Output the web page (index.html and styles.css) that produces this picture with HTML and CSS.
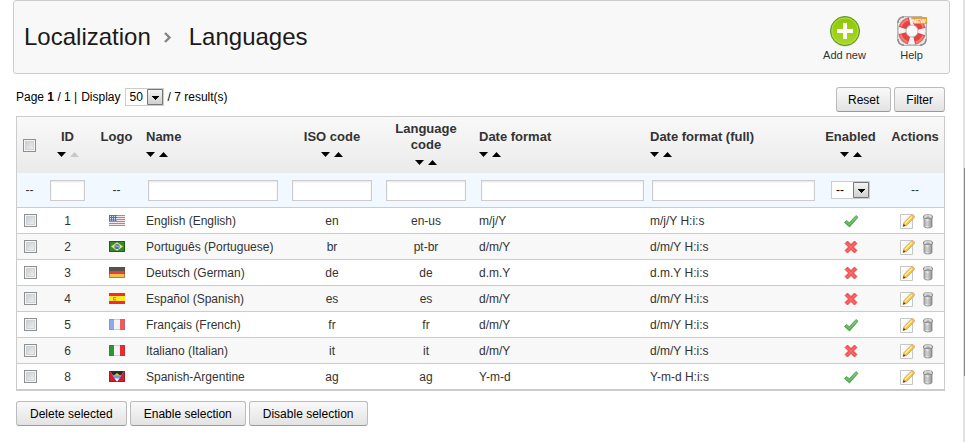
FILE: index.html
```
<!DOCTYPE html>
<html lang="en">
<head>
<meta charset="utf-8">
<title>Localization &gt; Languages</title>
<link rel="stylesheet" href="styles.css">
</head>
<body>
<svg class="defs" aria-hidden="true">
  <defs>
    <linearGradient id="g-green" x1="0" y1="0" x2="0" y2="1"><stop offset="0" stop-color="#8dc600"/><stop offset="1" stop-color="#a9d829"/></linearGradient>
    <linearGradient id="g-check" x1="0" y1="0" x2="0" y2="1"><stop offset="0" stop-color="#6fc466"/><stop offset="1" stop-color="#4aa347"/></linearGradient>
    <linearGradient id="g-can" x1="0" y1="0" x2="1" y2="0"><stop offset="0" stop-color="#aaa"/><stop offset=".4" stop-color="#f2f2f2"/><stop offset="1" stop-color="#888"/></linearGradient>
    <linearGradient id="g-select" x1="0" y1="0" x2="0" y2="1"><stop offset="0" stop-color="#f4f4f4"/><stop offset="1" stop-color="#cfcfcf"/></linearGradient>
  </defs>
  <symbol id="sort" viewBox="0 0 9 5"><path d="M0 0h9L4.500 5z" fill="currentColor"/></symbol>
  <symbol id="drop" viewBox="0 0 17 18"><path d="M.5 1.500h15v15H.500z" fill="url(#g-select)" stroke="#777"/><path d="M5 8h7v1h-1v1h-1v1H9v1H8v-1H7v-1H6V9H5z"/></symbol>
  <symbol id="check" viewBox="0 0 16 16"><path d="M1.500 9.500l2-2 2.800 2.300L13 2.500l2 1.800L6.500 14z" fill="url(#g-check)" stroke="#4b9c4a" stroke-width=".8" stroke-linejoin="round"/><path d="M3.300 9l3 2.700L13.200 4" fill="none" stroke="#8ed486" stroke-width=".8"/></symbol>
  <symbol id="cross" viewBox="0 0 16 16"><path d="M2 4.500L4.500 2 8 5.500 11.500 2 14 4.500 10.500 8l3.500 3.500-2.500 2.500L8 10.500 4.500 14 2 11.500 5.500 8z" fill="#f45252" stroke="#de4a50" stroke-width=".8" stroke-linejoin="round"/><path d="M3.500 4.200l8.600 8M12.200 4l-8.400 8.400" stroke="#ff8585" stroke-width=".8"/></symbol>
  <symbol id="edit" viewBox="0 0 16 16"><path d="M1.500 1.500h12v14h-12z" fill="#fdfdfd" stroke="#c6c6c6"/><path d="M3 6h5V3h3" fill="none" stroke="#eee"/><path d="M4 13.500l1-4 7.500-7.500q1.500-.8 2.700.8.600 1-.2 2L7.800 12.300z" fill="#f6c744" stroke="#d0954a" stroke-width=".8"/><path d="M6 10.500l7-7" stroke="#fff0a0" stroke-width="1.200"/><path d="M12 2.600l2.800 2.600q1-1.200.2-2.400-1.200-1.400-2.300-.9z" fill="#edb98a"/><path d="M4 13.500l.7-2.500 1.900 1.700z" fill="#4b3621"/></symbol>
  <symbol id="trash" viewBox="0 0 16 16"><path d="M4 4.500h8v9q-.2 1.500-4 1.500t-4-1.500z" fill="url(#g-can)" stroke="#858585" stroke-width=".8"/><path d="M6 7.500v5.500M8 8v5.500M10 7.500v5.500" stroke="#a2a2a2" stroke-width=".8"/><path d="M3.500 3q0-1.200 4.500-1.200T12.500 3v1.800q0 .9-4.500.9t-4.500-.9z" fill="#cacaca" stroke="#7c7c7c" stroke-width=".8"/><path d="M5 3h6" stroke="#f1f1f1"/><path d="M6.500 4.200h3" stroke="#777" stroke-width=".8"/></symbol>
  <symbol id="us" viewBox="0 0 16 11"><path d="M0 0h16v11H0z" fill="#f5e6e5"/><path d="M0 .5h16M0 2.500h16M0 4.500h16M0 6.500h16M0 8.500h16M0 10.500h16" stroke="#dd7571"/><path d="M0 0h8v6H0z" fill="#4977bd"/><path d="M1 1.500h7M1 3.500h7M1 5h7" stroke="#d2dff1" stroke-dasharray="1 1"/></symbol>
  <symbol id="br" viewBox="0 0 16 11"><path d="M0 0h16v11H0z" fill="#38892c"/><path d="M.5.5h15v10H.500z" fill="none" stroke="#176310"/><path d="M8 1.200l6 4.300-6 4.300-6-4.300z" fill="#dfe875"/><circle cx="8" cy="5.500" r="2.600" fill="#4a72b0"/><path d="M6 5q2-.5 4 1" fill="none" stroke="#c2dcee" stroke-width=".8"/></symbol>
  <symbol id="de" viewBox="0 0 16 11"><path d="M0 0h16v4H0z" fill="#55534c"/><path d="M0 4h16v3H0z" fill="#e04336"/><path d="M0 7h16v4H0z" fill="#f0c04c"/><path d="M.5.5h15v10H.500z" fill="none" stroke="#774128" stroke-opacity=".5"/></symbol>
  <symbol id="es" viewBox="0 0 16 11"><path d="M0 0h16v11H0z" fill="#ee2d25"/><path d="M0 3h16v5H0z" fill="#fbe62c"/><path d="M4 4h3v1H5v1h2v1.500H4z" fill="#d98735"/></symbol>
  <symbol id="fr" viewBox="0 0 16 11"><path d="M0 0h16v11H0z" fill="#f4f4f6"/><path d="M0 0h5v11H0z" fill="#8ea9e6"/><path d="M11 0h5v11h-5z" fill="#f15a5a"/><path d="M.5.5h15v10H.500z" fill="none" stroke="#6872ac" stroke-opacity=".3"/></symbol>
  <symbol id="it" viewBox="0 0 16 11"><path d="M0 0h16v11H0z" fill="#f3f3f3"/><path d="M0 0h5v11H0z" fill="#2c9635"/><path d="M11 0h5v11h-5z" fill="#ea2a2d"/><path d="M.5.5h15v10H.500z" fill="none" stroke="#444" stroke-opacity=".2"/></symbol>
  <symbol id="ag" viewBox="0 0 16 11"><path d="M0 0h16v11H0z" fill="#d91c2a"/><path d="M1 0h14L8 11z" fill="#fff"/><path d="M1 0h14l-3 4.500H4z" fill="#2c2a28"/><path d="M3.700 4.500h8.600L10.400 7.500H5.600z" fill="#5ea0e0"/><path d="M5 4.500L8 2l3 2.500z" fill="#e9bd38"/><path d="M.5.500h15v10H.500z" fill="none" stroke="#751620" stroke-opacity=".5"/></symbol>
</svg>

<div class="page">
  <main class="content">
    <header class="page-head">
      <h1>Localization
        <svg class="chevron" viewBox="0 0 8 12" aria-hidden="true"><path d="M1 2l4.500 4.500L1 11" fill="none" stroke="#858585" stroke-width="2.400"/></svg>
        Languages</h1>
      <nav class="tools">
        <a href="#add"><svg class="tool-icon" viewBox="0 0 32 32" aria-hidden="true"><circle cx="16" cy="17" r="14.500" fill="#ccc"/><circle cx="16" cy="16" r="14.500" fill="url(#g-green)" stroke="#51942e"/><circle cx="16" cy="16" r="13" fill="none" stroke="#b3dd48"/><path d="M14 8h4v6h6v4h-6v6h-4v-6H8v-4h6z" fill="#fff"/></svg>Add new</a>
        <a href="#help"><svg class="tool-icon" viewBox="0 0 32 32" aria-hidden="true">
          <path d="M6 1.500h20l4.500 5v19L26 30.500H6l-4.500-5v-19z" fill="#e6e6e6" stroke="#b5b5b5"/>
          <path d="M2 8q0-6 6-6M24 30q6 0 6-6M2 24q0 6 6 6" fill="none" stroke="#8f8f8f" stroke-width="1.500"/>
          <circle cx="16" cy="16" r="10" fill="none" stroke="#f3f3f3" stroke-width="8.500"/>
          <circle cx="16" cy="16" r="10" fill="none" stroke="#e84343" stroke-width="8" pathLength="80" stroke-dasharray="13 7" stroke-dashoffset="-4"/>
          <circle cx="16" cy="16" r="12" fill="none" stroke="#ff7a72" stroke-width="2" pathLength="80" stroke-dasharray="11 9" stroke-dashoffset="-5"/>
          <circle cx="16" cy="16" r="14" fill="none" stroke="#a7a7a7" stroke-width=".7"/>
          <circle cx="16" cy="16" r="6" fill="#fafafa" stroke="#aaa" stroke-width=".8"/>
          <path d="M15 2h16v7H17z" fill="#f39b2d"/>
          <text class="new" x="16" y="8">NEW</text>
        </svg>Help</a>
      </nav>
    </header>

    <form class="list">
      <div class="toolbar">
        <div class="pager">
          <span>Page <b>1</b> / 1 |</span>
          <label for="per-page">Display</label>
          <span class="select"><select id="per-page"><option>50</option></select><svg class="drop"><use href="#drop"/></svg></span>
          <span>/ 7 result(s)</span>
        </div>
        <div class="buttons">
          <button type="reset">Reset</button>
          <button type="button">Filter</button>
        </div>
      </div>

      <table>
        <colgroup><col class="c-check"><col class="c-id"><col class="c-logo"><col class="c-name"><col class="c-code"><col class="c-code"><col class="c-date"><col class="c-date"><col class="c-enabled"><col class="c-actions"></colgroup>
        <thead>
          <tr class="titles">
            <th><input type="checkbox" aria-label="Select all"></th>
            <th>ID<span class="sort"><svg><use href="#sort"/></svg><svg class="up current"><use href="#sort"/></svg></span></th>
            <th>Logo<span class="sort"></span></th>
            <th class="left">Name<span class="sort"><svg><use href="#sort"/></svg><svg class="up"><use href="#sort"/></svg></span></th>
            <th>ISO code<span class="sort"><svg><use href="#sort"/></svg><svg class="up"><use href="#sort"/></svg></span></th>
            <th>Language code<span class="sort"><svg><use href="#sort"/></svg><svg class="up"><use href="#sort"/></svg></span></th>
            <th class="left">Date format<span class="sort"><svg><use href="#sort"/></svg><svg class="up"><use href="#sort"/></svg></span></th>
            <th class="left">Date format (full)<span class="sort"><svg><use href="#sort"/></svg><svg class="up"><use href="#sort"/></svg></span></th>
            <th>Enabled<span class="sort"><svg><use href="#sort"/></svg><svg class="up"><use href="#sort"/></svg></span></th>
            <th>Actions<span class="sort"></span></th>
          </tr>
          <tr class="filters">
            <td>--</td>
            <td><input class="f-id" type="text" aria-label="ID"></td>
            <td>--</td>
            <td class="left"><input class="f-name" type="text" aria-label="Name"></td>
            <td><input class="f-code" type="text" aria-label="ISO code"></td>
            <td><input class="f-code" type="text" aria-label="Language code"></td>
            <td class="left"><input class="f-date" type="text" aria-label="Date format"></td>
            <td class="left"><input class="f-date" type="text" aria-label="Date format (full)"></td>
            <td><span class="select"><select aria-label="Enabled"><option>--</option></select><svg class="drop"><use href="#drop"/></svg></span></td>
            <td>--</td>
          </tr>
        </thead>
        <tbody>
          <tr><td><input type="checkbox" aria-label="Select English"></td><td>1</td><td><svg class="flag"><use href="#us"/></svg></td><td class="left">English (English)</td><td>en</td><td>en-us</td><td class="left">m/j/Y</td><td class="left">m/j/Y H:i:s</td><td><svg class="icon"><use href="#check"/></svg></td><td><span class="actions"><a href="#edit-1" aria-label="Edit"><svg class="icon"><use href="#edit"/></svg></a><a href="#delete-1" aria-label="Delete"><svg class="icon"><use href="#trash"/></svg></a></span></td></tr>
          <tr><td><input type="checkbox" aria-label="Select Português"></td><td>2</td><td><svg class="flag"><use href="#br"/></svg></td><td class="left">Português (Portuguese)</td><td>br</td><td>pt-br</td><td class="left">d/m/Y</td><td class="left">d/m/Y H:i:s</td><td><svg class="icon"><use href="#cross"/></svg></td><td><span class="actions"><a href="#edit-2" aria-label="Edit"><svg class="icon"><use href="#edit"/></svg></a><a href="#delete-2" aria-label="Delete"><svg class="icon"><use href="#trash"/></svg></a></span></td></tr>
          <tr><td><input type="checkbox" aria-label="Select Deutsch"></td><td>3</td><td><svg class="flag"><use href="#de"/></svg></td><td class="left">Deutsch (German)</td><td>de</td><td>de</td><td class="left">d.m.Y</td><td class="left">d.m.Y H:i:s</td><td><svg class="icon"><use href="#cross"/></svg></td><td><span class="actions"><a href="#edit-3" aria-label="Edit"><svg class="icon"><use href="#edit"/></svg></a><a href="#delete-3" aria-label="Delete"><svg class="icon"><use href="#trash"/></svg></a></span></td></tr>
          <tr><td><input type="checkbox" aria-label="Select Español"></td><td>4</td><td><svg class="flag"><use href="#es"/></svg></td><td class="left">Español (Spanish)</td><td>es</td><td>es</td><td class="left">d/m/Y</td><td class="left">d/m/Y H:i:s</td><td><svg class="icon"><use href="#cross"/></svg></td><td><span class="actions"><a href="#edit-4" aria-label="Edit"><svg class="icon"><use href="#edit"/></svg></a><a href="#delete-4" aria-label="Delete"><svg class="icon"><use href="#trash"/></svg></a></span></td></tr>
          <tr><td><input type="checkbox" aria-label="Select Français"></td><td>5</td><td><svg class="flag"><use href="#fr"/></svg></td><td class="left">Français (French)</td><td>fr</td><td>fr</td><td class="left">d/m/Y</td><td class="left">d/m/Y H:i:s</td><td><svg class="icon"><use href="#check"/></svg></td><td><span class="actions"><a href="#edit-5" aria-label="Edit"><svg class="icon"><use href="#edit"/></svg></a><a href="#delete-5" aria-label="Delete"><svg class="icon"><use href="#trash"/></svg></a></span></td></tr>
          <tr><td><input type="checkbox" aria-label="Select Italiano"></td><td>6</td><td><svg class="flag"><use href="#it"/></svg></td><td class="left">Italiano (Italian)</td><td>it</td><td>it</td><td class="left">d/m/Y</td><td class="left">d/m/Y H:i:s</td><td><svg class="icon"><use href="#cross"/></svg></td><td><span class="actions"><a href="#edit-6" aria-label="Edit"><svg class="icon"><use href="#edit"/></svg></a><a href="#delete-6" aria-label="Delete"><svg class="icon"><use href="#trash"/></svg></a></span></td></tr>
          <tr><td><input type="checkbox" aria-label="Select Spanish-Argentine"></td><td>8</td><td><svg class="flag"><use href="#ag"/></svg></td><td class="left">Spanish-Argentine</td><td>ag</td><td>ag</td><td class="left">Y-m-d</td><td class="left">Y-m-d H:i:s</td><td><svg class="icon"><use href="#check"/></svg></td><td><span class="actions"><a href="#edit-8" aria-label="Edit"><svg class="icon"><use href="#edit"/></svg></a><a href="#delete-8" aria-label="Delete"><svg class="icon"><use href="#trash"/></svg></a></span></td></tr>
        </tbody>
      </table>

      <div class="buttons bulk">
        <button type="button">Delete selected</button>
        <button type="button">Enable selection</button>
        <button type="button">Disable selection</button>
      </div>
    </form>
  </main>
  <div class="rail"><div class="thumb"></div></div>
</div>
</body>
</html>
```
FILE: styles.css
```
* { box-sizing: border-box; }

body {
  margin: 0;
  background: #fff;
  color: #333;
  font: 12px/16px "Liberation Sans", Arial, sans-serif;
}

svg { display: block; }
.defs { position: absolute; width: 0; height: 0; }

.page { display: flex; min-height: 100vh; }
.content { flex: 1; min-width: 0; padding: 0 13px; }

/* edge rail */
.rail { width: 2px; display: grid; grid-template-rows: 38% 47% 1fr; background: #e3e3e3; }
.thumb { grid-row: 2; margin-left: 1px; background: #858585; }

/* page heading */
.page-head {
  display: flex;
  justify-content: space-between;
  align-items: center;
  padding: 0 10px;
  border: 1px solid #ccc;
  border-radius: 3px;
  background: #f8f8f8;
}
h1 {
  display: flex;
  align-items: center;
  gap: 13px;
  margin: 0;
  color: #1a1a1a;
  font-size: 24px;
  line-height: 28px;
  font-weight: 400;
}
.chevron { width: 8px; height: 12px; margin-right: 4px; }
.tools { display: flex; gap: 12px; padding: 14px 0 10px; }
.tools a {
  width: 55px;
  color: #333;
  font-size: 11px;
  text-align: center;
  text-decoration: none;
}
.tool-icon { width: 32px; height: 32px; margin: 0 auto; }
.new { font-size: 6px; font-weight: 700; fill: #fff; }

/* list */
.list { padding: 13px 5px 0 3px; }
.toolbar { display: flex; justify-content: space-between; margin-bottom: 4px; }
.pager { display: flex; gap: 4px; height: 20px; align-items: center; color: #000; }
.buttons { display: flex; gap: 3px; }
.bulk { margin-top: 10px; }

button {
  height: 25px;
  padding: 0 11px;
  border: 1px solid #bbb;
  border-bottom-color: #999;
  border-radius: 3px;
  background: linear-gradient(#f9f9f9, #e3e3e3);
  color: #000;
  font: 12px/16px "Liberation Sans", Arial, sans-serif;
}
.bulk button { padding: 0 13px; }

.select { position: relative; display: inline-block; height: 18px; vertical-align: middle; }
select {
  appearance: none;
  display: block;
  width: 39px;
  height: 18px;
  padding: 0 0 0 4px;
  border: 1px solid #ccc;
  border-radius: 0;
  background: #fff;
  color: #000;
  font: 12px/16px "Liberation Sans", Arial, sans-serif;
}
.drop { position: absolute; top: 0; right: 0; width: 17px; height: 18px; pointer-events: none; }

input[type="checkbox"] {
  appearance: none;
  display: block;
  width: 13px;
  height: 13px;
  margin: 0 auto;
  border: 1px solid #8e8f8f;
  border-radius: 0;
  background: linear-gradient(135deg, #c0c6cd, #f6f6f6);
  box-shadow: inset 0 0 0 1px #f4f4f4, inset 0 0 0 2px #d0d3d6;
}
input[type="text"] {
  display: block;
  height: 21px;
  margin: 0 auto;
  padding: 0 3px;
  border: 1px solid #ccc;
  background: #fff;
  box-shadow: inset 0 1px 2px #e4e4e4;
  font: 12px/16px "Liberation Sans", Arial, sans-serif;
}
.f-id { width: 35px; }
.f-code { width: 80px; }
input.f-name { width: 130px; margin: 0 2px; }
input.f-date { width: calc(100% - 2px); margin: 0 0 0 2px; }

table {
  width: 100%;
  table-layout: fixed;
  border: 1px solid #ccc;
  border-bottom-width: 2px;
  border-spacing: 0;
}
.c-check { width: 25px; }
.c-id { width: 51px; }
.c-logo { width: 47px; }
.c-name { width: 145px; }
.c-code { width: 94px; }
.c-enabled { width: 71px; }
.c-actions { width: 58px; }

th, td { padding: 0; text-align: center; vertical-align: middle; }
.left { padding-left: 6px; text-align: left; }

.titles { height: 56px; background: linear-gradient(#f9f9f9, #eaeaea); }
th { font-size: 13px; }
.sort { display: flex; justify-content: center; align-items: center; gap: 4px; height: 16px; padding-top: 2px; color: #000; }
.sort svg { width: 9px; height: 5px; }
.left .sort { justify-content: flex-start; }
.sort .up { transform: rotate(180deg); }
.sort .current { color: #c8c8c8; }

.filters { height: 35px; background: #f1f8ff; }
.filters td { border-bottom: 1px solid #ccc; }

tbody tr { height: 26px; }
tbody tr:nth-child(even) { background: #f8f8f8; }
tbody td { border-bottom: 1px solid #ccc; }
tbody tr:last-child { height: 25px; }
tbody tr:last-child td { border-bottom: 0; }
tbody td:first-child { padding-left: 2px; }

.flag { width: 16px; height: 11px; margin: 0 auto; }
.icon { width: 16px; height: 16px; margin: 0 auto; }
.actions { display: flex; justify-content: center; gap: 5px; padding-left: 5px; }
```
